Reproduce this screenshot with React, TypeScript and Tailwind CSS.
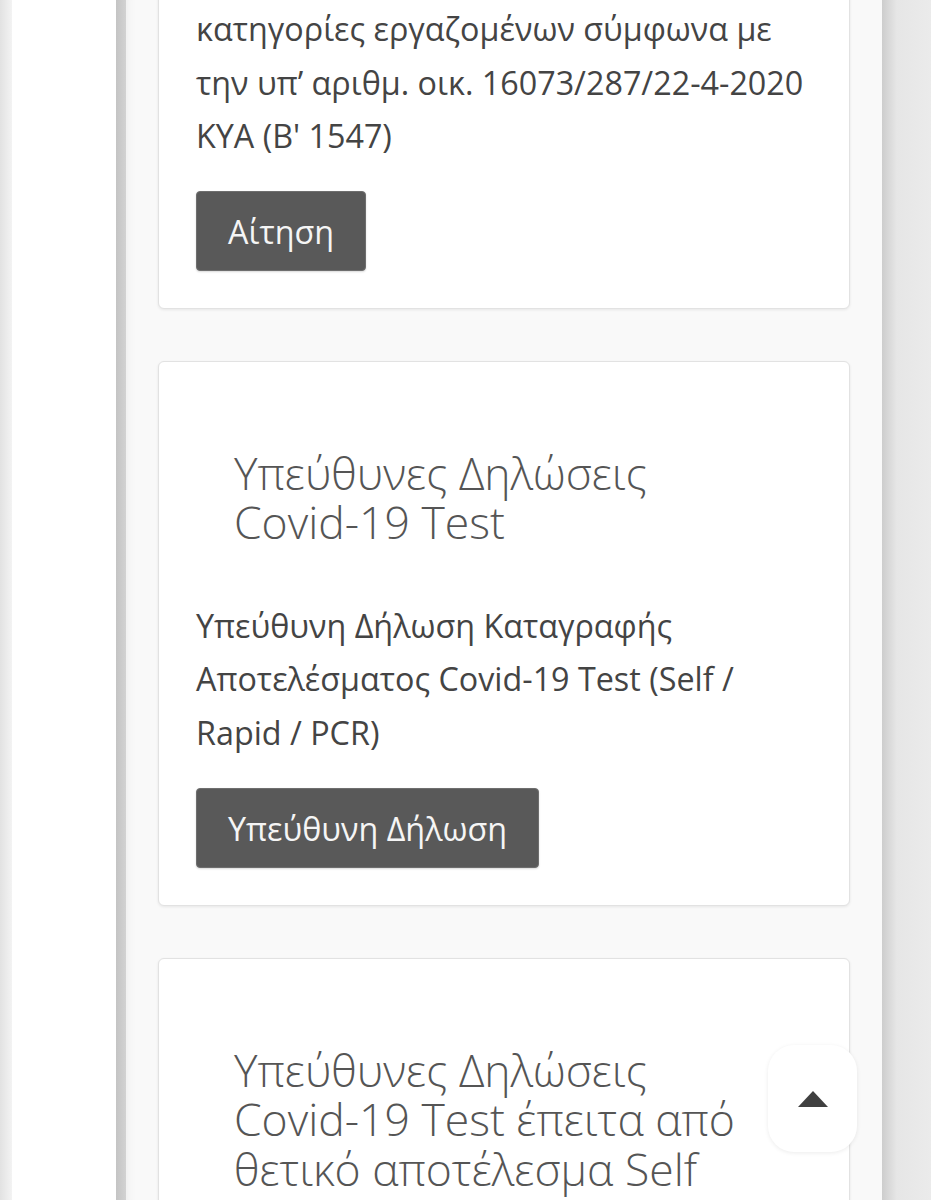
import React from 'react';

type Card = {
  title?: string;
  body?: string[];
  button?: string;
};

function ServiceCard({ title, body, button, className = '' }: Card & { className?: string }) {
  return (
    <div
      className={`bg-white border border-[#e2e2e2] rounded-[6px] shadow-[0_1px_3px_rgba(0,0,0,0.08)] px-[37px] pt-[37px] pb-[37px] ${className}`}
    >
      {title && (
        <h3 className="mt-[49px] ml-[38px] mr-[38px] mb-[52px] text-[44.5px] leading-[49.5px] font-light text-[#555]">
          {title}
        </h3>
      )}
      {body && (
        <p className="text-[32.3px] leading-[53.6px] text-[#444] mb-[28px]">
          {body.map((line, i) => (
            <React.Fragment key={i}>
              {line}
              {i < body.length - 1 && <br />}
            </React.Fragment>
          ))}
        </p>
      )}
      {button && (
        <button className="bg-[#595959] border border-[#6e6e6e] rounded-[4px] px-[31px] py-[12px] text-[32.3px] leading-[54px] text-[#f5f5f5] shadow-[0_1px_2px_rgba(0,0,0,0.15)]">
          {button}
        </button>
      )}
    </div>
  );
}

export default function App() {
  return (
    <div
      className="relative w-[931px] h-[1200px] overflow-hidden flex"
      style={{ fontFamily: '"Open Sans", "Noto Sans", sans-serif' }}
    >
      {/* left drawer edge */}
      <div className="w-[12px] h-full bg-gradient-to-r from-[#e2e2e2] to-[#f3f3f3]" />
      <div className="w-[104px] h-full bg-white" />
      <div className="w-[10px] h-full bg-gradient-to-r from-[#c4c4c4] to-[#d2d2d2]" />

      {/* main column */}
      <div className="relative w-[756px] h-full bg-[#f9f9f9] shadow-[inset_12px_0_10px_-10px_rgba(0,0,0,0.05)]">
        <div className="px-[32px] -mt-[36px] flex flex-col gap-[52px]">
          <ServiceCard
            body={[
              'κατηγορίες εργαζομένων σύμφωνα με',
              'την υπ’ αριθμ. οικ. 16073/287/22-4-2020',
              "ΚΥΑ (Β' 1547)",
            ]}
            button="Αίτηση"
          />
          <ServiceCard
            title="Υπεύθυνες Δηλώσεις Covid-19 Test"
            body={[
              'Υπεύθυνη Δήλωση Καταγραφής',
              'Αποτελέσματος Covid-19 Test (Self /',
              'Rapid / PCR)',
            ]}
            button="Υπεύθυνη Δήλωση"
          />
          <ServiceCard title="Υπεύθυνες Δηλώσεις Covid-19 Test έπειτα από θετικό αποτέλεσμα Self Test" />
        </div>
      </div>

      {/* right drawer edge */}
      <div className="w-[49px] h-full bg-gradient-to-r from-[#cdcdcd] via-[#e6e6e6] via-30% to-[#ebebeb]" />

      {/* back to top */}
      <button className="absolute left-[768px] top-[1045px] w-[89px] h-[107px] bg-white rounded-[26px] shadow-[0_1px_4px_rgba(0,0,0,0.08)] flex items-center justify-center">
        <svg width="30" height="16" viewBox="0 0 30 16">
          <polygon points="15,0 30,16 0,16" fill="#404040" />
        </svg>
      </button>
    </div>
  );
}
